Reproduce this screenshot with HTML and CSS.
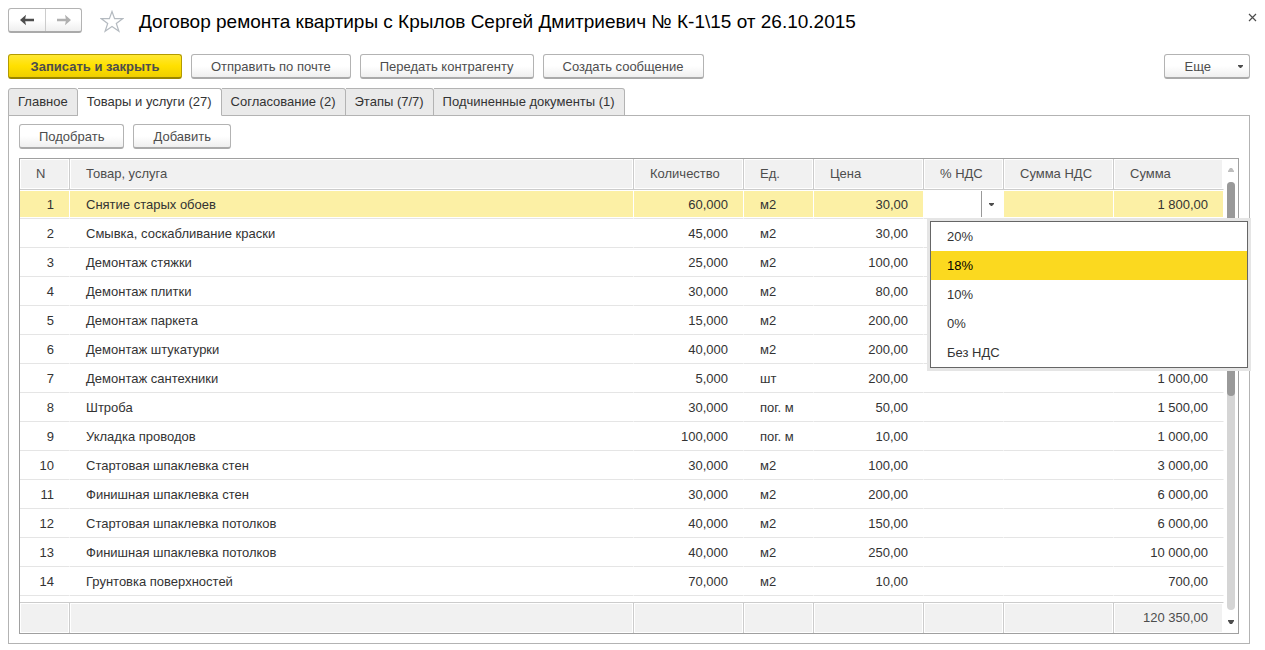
FILE: index.html
```html
<!DOCTYPE html>
<html lang="ru">
<head>
<meta charset="utf-8">
<title>Договор ремонта квартиры</title>
<link rel="stylesheet" href="styles.css">
</head>
<body>
<div class="window">
  <header class="title-bar">
    <div class="history">
      <button class="history-btn" type="button" aria-label="Назад"><svg width="14" height="12" viewBox="0 0 14 12"><path d="M0 6 6 0.8 5.2 4.7H14V7.3H5.2L6 11.2Z" fill="#4d4d4d"/></svg></button>
      <button class="history-btn" type="button" aria-label="Вперед"><svg width="14" height="12" viewBox="0 0 14 12"><path d="M14 6 8 0.8 8.8 4.7H0V7.3H8.8L8 11.2Z" fill="#b0b0b0"/></svg></button>
    </div>
    <button class="icon-btn star" type="button" aria-label="В избранное"><svg width="24" height="23" viewBox="0 0 24 23"><path d="M12 1.5 14.6 8.7H22.6L16.3 13.4 18.9 21.2 12 16.4 5.1 21.2 7.7 13.4 1.4 8.7H9.4Z" fill="#fff" stroke="#b4bac0" stroke-width="1.2"/></svg></button>
    <h1 class="title">Договор ремонта квартиры с Крылов Сергей Дмитриевич № К-1\15 от 26.10.2015</h1>
    <button class="icon-btn close" type="button" aria-label="Закрыть"><svg width="9" height="9" viewBox="0 0 9 9"><path d="M1 1 8 8M8 1 1 8" stroke="#4d4d4d" stroke-width="1.2"/></svg></button>
  </header>

  <div class="commands">
    <button class="btn primary" type="button">Записать и закрыть</button>
    <button class="btn" type="button">Отправить по почте</button>
    <button class="btn" type="button">Передать контрагенту</button>
    <button class="btn" type="button">Создать сообщение</button>
    <button class="btn more" type="button">Еще<svg width="5" height="3" viewBox="0 0 5 3"><path d="M0 0H5V1L3 3H2L0 1Z" fill="#4d4d4d"/></svg></button>
  </div>

  <nav class="tabs" role="tablist">
    <button class="tab" type="button" role="tab">Главное</button>
    <button class="tab active" type="button" role="tab" aria-selected="true">Товары и услуги (27)</button>
    <button class="tab" type="button" role="tab">Согласование (2)</button>
    <button class="tab" type="button" role="tab">Этапы (7/7)</button>
    <button class="tab" type="button" role="tab">Подчиненные документы (1)</button>
  </nav>

  <main class="panel">
    <div class="toolbar">
      <button class="btn" type="button">Подобрать</button>
      <button class="btn" type="button">Добавить</button>
    </div>
    <div class="grid">
      <table class="goods">
        <colgroup><col class="c-n"><col><col class="c-wide"><col class="c-unit"><col class="c-wide"><col class="c-rate"><col class="c-wide"><col class="c-wide"></colgroup>
        <thead>
          <tr><th>N</th><th>Товар, услуга</th><th>Количество</th><th>Ед.</th><th>Цена</th><th>% НДС</th><th>Сумма НДС</th><th>Сумма</th></tr>
        </thead>
        <tbody>
          <tr class="selected"><td class="num">1</td><td>Снятие старых обоев</td><td class="num">60,000</td><td>м2</td><td class="num">30,00</td>
            <td class="editor">
              <div class="combo"><input class="combo-input" type="text" aria-label="% НДС"><button class="combo-btn" type="button" aria-label="Выбрать"><svg width="5" height="3" viewBox="0 0 5 3"><path d="M0 0H5V1L3 3H2L0 1Z" fill="#4d4d4d"/></svg></button></div>
              <ul class="options" role="listbox" aria-label="% НДС">
                <li class="option" role="option">20%</li>
                <li class="option current" role="option" aria-selected="true">18%</li>
                <li class="option" role="option">10%</li>
                <li class="option" role="option">0%</li>
                <li class="option" role="option">Без НДС</li>
              </ul>
            </td><td></td><td class="num">1 800,00</td></tr>
          <tr><td class="num">2</td><td>Смывка, соскабливание краски</td><td class="num">45,000</td><td>м2</td><td class="num">30,00</td><td></td><td></td><td></td></tr>
          <tr><td class="num">3</td><td>Демонтаж стяжки</td><td class="num">25,000</td><td>м2</td><td class="num">100,00</td><td></td><td></td><td></td></tr>
          <tr><td class="num">4</td><td>Демонтаж плитки</td><td class="num">30,000</td><td>м2</td><td class="num">80,00</td><td></td><td></td><td></td></tr>
          <tr><td class="num">5</td><td>Демонтаж паркета</td><td class="num">15,000</td><td>м2</td><td class="num">200,00</td><td></td><td></td><td></td></tr>
          <tr><td class="num">6</td><td>Демонтаж штукатурки</td><td class="num">40,000</td><td>м2</td><td class="num">200,00</td><td></td><td></td><td></td></tr>
          <tr><td class="num">7</td><td>Демонтаж сантехники</td><td class="num">5,000</td><td>шт</td><td class="num">200,00</td><td></td><td></td><td class="num">1 000,00</td></tr>
          <tr><td class="num">8</td><td>Штроба</td><td class="num">30,000</td><td>пог. м</td><td class="num">50,00</td><td></td><td></td><td class="num">1 500,00</td></tr>
          <tr><td class="num">9</td><td>Укладка проводов</td><td class="num">100,000</td><td>пог. м</td><td class="num">10,00</td><td></td><td></td><td class="num">1 000,00</td></tr>
          <tr><td class="num">10</td><td>Стартовая шпаклевка стен</td><td class="num">30,000</td><td>м2</td><td class="num">100,00</td><td></td><td></td><td class="num">3 000,00</td></tr>
          <tr><td class="num">11</td><td>Финишная шпаклевка стен</td><td class="num">30,000</td><td>м2</td><td class="num">200,00</td><td></td><td></td><td class="num">6 000,00</td></tr>
          <tr><td class="num">12</td><td>Стартовая шпаклевка потолков</td><td class="num">40,000</td><td>м2</td><td class="num">150,00</td><td></td><td></td><td class="num">6 000,00</td></tr>
          <tr><td class="num">13</td><td>Финишная шпаклевка потолков</td><td class="num">40,000</td><td>м2</td><td class="num">250,00</td><td></td><td></td><td class="num">10 000,00</td></tr>
          <tr><td class="num">14</td><td>Грунтовка поверхностей</td><td class="num">70,000</td><td>м2</td><td class="num">10,00</td><td></td><td></td><td class="num">700,00</td></tr>
        </tbody>
        <tfoot>
          <tr class="gap"><td colspan="8"></td></tr>
          <tr class="total"><td></td><td></td><td></td><td></td><td></td><td></td><td></td><td class="num">120 350,00</td></tr>
        </tfoot>
      </table>
      <div class="scroll" aria-hidden="true">
        <svg width="6" height="4" viewBox="0 0 6 4"><path d="M0 4V3L2 0H4L6 3V4Z" fill="#bdbdbd"/></svg>
        <div class="track"><div class="thumb"></div></div>
        <svg width="6" height="4" viewBox="0 0 6 4"><path d="M0 0V1L2 4H4L6 1V0Z" fill="#4d4d4d"/></svg>
      </div>
    </div>
  </main>
</div>
</body>
</html>
```
FILE: styles.css
```css
* { box-sizing: border-box; }

body {
  margin: 0;
  background: #fff;
  color: #333;
  font: 13px/16px "Liberation Sans", Arial, sans-serif;
}

button, input { font: inherit; color: inherit; }

svg { display: block; }

.window { padding: 8px 15px 6px 8px; }

.title-bar {
  display: flex;
  align-items: center;
  height: 25px;
}

.history {
  display: flex;
  height: 25px;
  border: 1px solid #b3b3b3;
  border-bottom: 2px solid #aaa;
  border-radius: 3px;
  background: linear-gradient(#fff 50%, #efefef);
}

.history-btn {
  display: flex;
  align-items: center;
  justify-content: center;
  width: 36px;
  padding: 0;
  border: 0;
  background: none;
}

.history-btn + .history-btn { border-left: 1px solid #ccc; }

.icon-btn {
  padding: 0;
  border: 0;
  background: none;
}

.star { margin: 1px 15px 0 18px; }

.title {
  flex: 1;
  margin: 0;
  padding-top: 2px;
  color: #000;
  font-size: 19px;
  font-weight: 400;
  line-height: 24px;
  white-space: nowrap;
}

.close {
  align-self: flex-start;
  margin: 5px -7px 0 0;
}

.commands {
  display: flex;
  gap: 9px;
  margin-top: 21px;
}

.btn {
  height: 25px;
  padding: 1px 19px 0;
  border: 1px solid #b3b3b3;
  border-bottom: 2px solid #aaa;
  border-radius: 3px;
  background: linear-gradient(#fff 50%, #efefef);
  color: #4d4d4d;
  line-height: 21px;
  white-space: nowrap;
}

.primary {
  min-width: 174px;
  border-color: #b39b00 #b39b00 #998500;
  background: linear-gradient(#ffe835, #ffe000 50%, #efcf00);
  font-weight: 700;
}

.more {
  display: flex;
  align-items: center;
  gap: 27px;
  margin-left: auto;
  padding-left: 20px;
  padding-right: 6px;
}

.tabs {
  display: flex;
  margin: 9px 0 -1px;
}

.tab {
  height: 28px;
  padding: 0 9px 1px;
  border: 1px solid #b3b3b3;
  border-left-width: 0;
  border-radius: 0 3px 0 0;
  background: #eaeaea;
  line-height: 25px;
  white-space: nowrap;
}

.tab:first-child {
  border-left-width: 1px;
  border-radius: 3px 3px 0 0;
}

.tab.active {
  position: relative;
  border-bottom-color: #fff;
  background: #fff;
}

.panel {
  padding: 8px 10px 9px;
  border: 1px solid #b3b3b3;
}

.toolbar {
  display: flex;
  gap: 9px;
  margin-bottom: 9px;
}

.grid {
  display: flex;
  border: 1px solid #a0a0a0;
}

.goods {
  flex: 1;
  width: 100%;
  table-layout: fixed;
  border-spacing: 0;
}

.c-n { width: 50px; }
.c-wide { width: 110px; }
.c-unit { width: 70px; }
.c-rate { width: 80px; }

.goods th, .goods td {
  height: 29px;
  padding: 0 15px 0 16px;
  border-right: 1px solid #fff;
  border-bottom: 1px solid #e5e5e5;
  text-align: left;
  white-space: nowrap;
}

.goods tbody td { padding-top: 2px; }

.goods th, .goods .total td {
  height: 31px;
  border-right-color: #ccc;
  background: #f1f1f1;
  box-shadow: inset 0 0 0 1px #fff;
  color: #4d4d4d;
  font-weight: 400;
}

.goods th { border-bottom-color: #ccc; }

.goods .total td {
  border-top: 1px solid #ccc;
  border-bottom: 0;
}

.goods th:last-child, .goods .total td:last-child { border-right-color: #fff; }

.goods .num { padding-left: 0; text-align: right; }

.goods .gap td {
  height: 6px;
  padding: 0;
  border: 0;
}

.goods .selected td {
  background: #fcf0a5;
  box-shadow: inset 0 1px #fff, inset 0 -1px #fff;
}

.goods .selected .editor {
  position: relative;
  padding: 0;
  background: #fff;
}

.combo { display: flex; height: 26px; }

.combo-input {
  flex: 1;
  min-width: 0;
  padding: 0 4px;
  border: 0;
  outline: 0;
  background: #fff;
}

.combo-btn {
  display: flex;
  align-items: center;
  width: 22px;
  padding: 0 0 0 7px;
  border: 0;
  border-left: 1px solid #999;
  background: #fff;
}

.options {
  position: absolute;
  z-index: 2;
  top: 31px;
  left: 6px;
  width: 318px;
  margin: 0;
  padding: 0;
  border: 1px solid #666;
  background: #fff;
  box-shadow: 0 0 0 3px #e5e5e5;
  list-style: none;
}

.option {
  padding: 0 16px;
  line-height: 29px;
}

.option.current {
  background: #fbd91f;
  color: #000;
}

.scroll {
  display: flex;
  flex: none;
  flex-direction: column;
  align-items: center;
  gap: 10px;
  width: 14px;
  padding: 9px 0;
}

.track {
  flex: 1;
  width: 8px;
  border-radius: 4px;
  background: #d5d5d5;
}

.thumb {
  height: 50%;
  border-radius: 4px;
  background: #999;
}
```
